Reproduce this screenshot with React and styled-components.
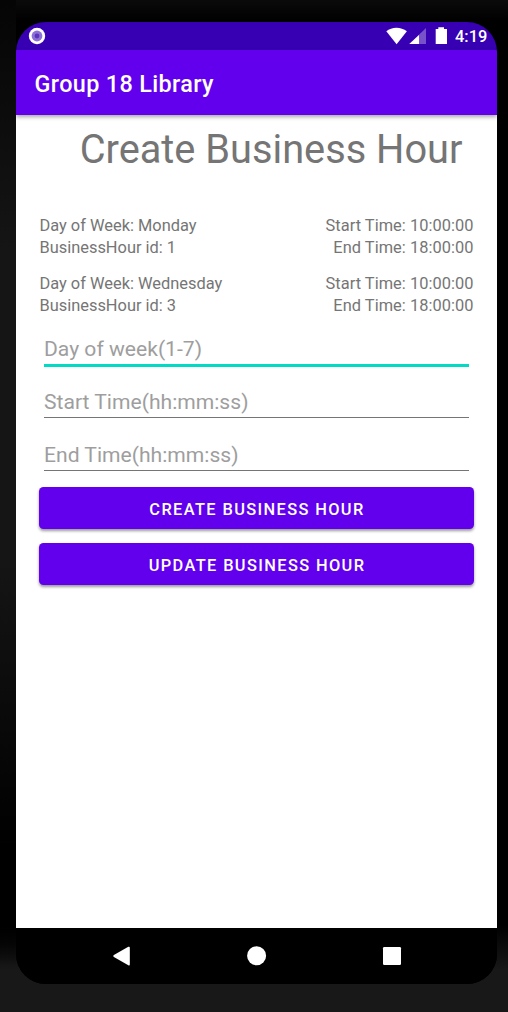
import React from 'react';
import styled, { createGlobalStyle } from 'styled-components';

const Global = createGlobalStyle`
  * { box-sizing: border-box; }
  body { margin: 0; background: #000; font-family: Roboto, "Liberation Sans", sans-serif; }
`;

const Device = styled.div`
  width: 508px;
  height: 1012px;
  padding: 22px 11px 28px 16px;
  background:
    linear-gradient(to bottom, #050505 0, #080808 50px, #151515 250px, #151515 560px, #000 850px, #000 920px, transparent 965px) 0 0 / 16px 100% no-repeat,
    linear-gradient(to bottom, #0b0b0b 0, #000 22px, #000 925px, #181818 970px);
`;

const Screen = styled.main`
  width: 481px;
  height: 962px;
  display: flex;
  flex-direction: column;
  overflow: hidden;
  background: #000;
  border-radius: 30px;
`;

const StatusBar = styled.header`
  height: 28px;
  flex: none;
  display: flex;
  align-items: center;
  justify-content: space-between;
  padding: 0 9px 0 12px;
  background: #3700b3;
  color: #fff;
`;

const StatusIcons = styled.div`
  display: flex;
  align-items: center;
`;

const Clock = styled.time`
  width: 33px;
  margin-left: 6px;
  padding-top: 2px;
  font-size: 16.4px;
  font-weight: 500;
  line-height: 28px;
  white-space: nowrap;
`;

const AppBar = styled.div`
  position: relative;
  height: 65px;
  flex: none;
  display: flex;
  align-items: center;
  padding: 2px 18.5px 0;
  background: #6200ee;
  box-shadow: 0 2px 4px rgba(0, 0, 0, 0.35);
`;

const AppTitle = styled.div`
  color: #fff;
  font-size: 23.4px;
  font-weight: 500;
  letter-spacing: 0.36px;
  white-space: nowrap;
`;

const Content = styled.section`
  flex: 1;
  display: flex;
  flex-direction: column;
  padding: 10px 23px 0;
  background: #fff;
`;

const Heading = styled.h1`
  margin: 0 11.5px 40px 0;
  font-size: 39.75px;
  font-weight: 400;
  line-height: 50px;
  text-align: right;
  white-space: nowrap;
  color: #757575;
`;

const HourRow = styled.div`
  display: flex;
  justify-content: space-between;
  margin: 0 0.5px 13.5px;
  color: #757575;
  font-size: 16.4px;
  line-height: 22px;
`;

const HourColumn = styled.div`
  text-align: ${(p) => p.$align || 'left'};
  letter-spacing: ${(p) => (p.$align ? '0.04px' : '0')};
  white-space: nowrap;
`;

const Field = styled.input`
  height: 37px;
  margin: 0 5px ${(p) => (p.$active ? 14 : 16)}px;
  padding: ${(p) => (p.$active ? 2 : 5)}px 0 0;
  border: 0;
  border-bottom: ${(p) => (p.$active ? '3px solid #03dac5' : '1px solid #757575')};
  border-radius: 0;
  outline: 0;
  background: transparent;
  font: 400 21.1px Roboto, "Liberation Sans", sans-serif;
  &::placeholder { color: #9e9e9e; opacity: 1; }
`;

const Button = styled.button`
  height: 42px;
  flex: none;
  margin: 0 0 14px;
  padding: 2px 0 0 1px;
  border: 0;
  border-radius: 4.5px;
  background: #6200ee;
  color: #fff;
  box-shadow: 0 2px 3px rgba(0, 0, 0, 0.4);
  font: 500 16.4px Roboto, "Liberation Sans", sans-serif;
  letter-spacing: 1.37px;
`;

const NavBar = styled.nav`
  height: 56px;
  flex: none;
  display: flex;
  justify-content: center;
  align-items: center;
  gap: 107.5px;
  background: #000;
`;

const Icon = styled.svg`
  display: block;
  flex: none;
`;

const hours = [
  { day: 'Monday', id: 1, start: '10:00:00', end: '18:00:00' },
  { day: 'Wednesday', id: 3, start: '10:00:00', end: '18:00:00' },
];

export default function App() {
  return (
    <>
      <Global />
      <Device>
        <Screen>
          <StatusBar>
            <Icon width="18" height="28" viewBox="0 0 18 28">
              <circle cx="9" cy="14" r="8.2" fill="#fff" />
              <circle cx="9" cy="14" r="5.4" fill="#8d70d5" />
              <circle cx="9" cy="14" r="2.4" fill="#5b35bd" />
            </Icon>
            <StatusIcons>
              <Icon width="63" height="28" viewBox="0 0 63 28" fill="#fff">
                <path d="M0.3 9.2C3.2 7 6.6 5.8 10.4 5.8S17.9 7 20.9 9.2L10.6 22.2Z" />
                <path d="M40 6V22H23.3Z" opacity=".32" />
                <path d="M33 13V22H23.3Z" />
                <path d="M49.7 7H52.3V5.3H58V7H61V22H49.7Z" />
              </Icon>
              <Clock>4:19</Clock>
            </StatusIcons>
          </StatusBar>
          <AppBar>
            <AppTitle>Group 18 Library</AppTitle>
          </AppBar>
          <Content>
            <Heading>Create Business Hour</Heading>
            {hours.map((h) => (
              <HourRow key={h.id}>
                <HourColumn>
                  <div>Day of Week: {h.day}</div>
                  <div>BusinessHour id: {h.id}</div>
                </HourColumn>
                <HourColumn $align="right">
                  <div>Start Time: {h.start}</div>
                  <div>End Time: {h.end}</div>
                </HourColumn>
              </HourRow>
            ))}
            <Field $active placeholder="Day of week(1-7)" />
            <Field placeholder="Start Time(hh:mm:ss)" />
            <Field placeholder="End Time(hh:mm:ss)" />
            <Button>CREATE BUSINESS HOUR</Button>
            <Button>UPDATE BUSINESS HOUR</Button>
          </Content>
          <NavBar>
            <Icon width="28" height="28" viewBox="0 0 28 28" fill="#fff">
              <path d="M6.9 13.1L21.3 4.8Q22.8 4.2 22.8 5.8V22.2Q22.8 24 21.3 23.2L6.9 15Q5.4 14 6.9 13.1Z" />
            </Icon>
            <Icon width="28" height="28" viewBox="0 0 28 28" fill="#fff">
              <circle cx="13.6" cy="13.8" r="9.5" />
            </Icon>
            <Icon width="28" height="28" viewBox="0 0 28 28" fill="#fff">
              <rect x="5" y="5" width="18" height="18" rx="1.2" />
            </Icon>
          </NavBar>
        </Screen>
      </Device>
    </>
  );
}
